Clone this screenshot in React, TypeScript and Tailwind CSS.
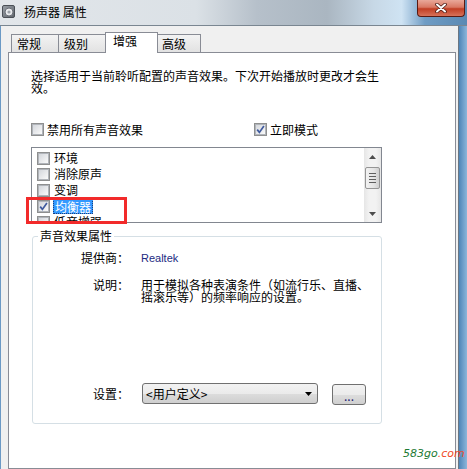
import React from "react";

type Item = { label: string; checked?: boolean; selected?: boolean };

const effects: Item[] = [
    { label: "环境" },
    { label: "消除原声" },
    { label: "变调" },
    { label: "均衡器", checked: true, selected: true },
    { label: "低音增强" },
];

const CheckBox = ({ checked }: { checked?: boolean }) => (
    <span className="flex h-[13px] w-[13px] shrink-0 items-center justify-center border border-[#8e8f8f] bg-[#f4f4f4]">
        <span className="flex h-[11px] w-[11px] items-center justify-center border border-[#b0b4ba] bg-gradient-to-br from-[#d4d7dc] to-[#fafafa]">
            {checked && (
                <svg width="9" height="9" viewBox="0 0 9 9">
                    <path d="M1.2 4.6 L3.4 7.4 L7.9 1" stroke="#3f5a9e" strokeWidth="1.7" fill="none" />
                </svg>
            )}
        </span>
    </span>
);

const SpeakerIcon = () => (
    <svg width="13" height="13" viewBox="0 0 13 13" className="ml-[2px] mt-[5px]">
        <defs>
            <linearGradient id="spk" x1="0" y1="0" x2="1" y2="1">
                <stop offset="0" stopColor="#9aa0a7" />
                <stop offset="1" stopColor="#5e636b" />
            </linearGradient>
        </defs>
        <rect x="0.5" y="0.5" width="12" height="12" rx="1.5" fill="url(#spk)" stroke="#4b5057" />
        <circle cx="7" cy="7" r="4" fill="#e9ebee" stroke="#6b7078" />
        <circle cx="7" cy="7" r="1.6" fill="#9ca1a8" />
    </svg>
);

const CloseButton = () => (
    <div className="ml-auto mr-[2px] flex h-[17px] w-[48px] items-center justify-center rounded-b-[4px] border border-t-0 border-[#5a1a12] bg-[linear-gradient(#e9a899_0%,#d97863_45%,#c13e24_55%,#d7725a_100%)]">
        <svg width="12" height="10" viewBox="0 0 12 10">
            <path d="M2 1.5 L10 8.5 M10 1.5 L2 8.5" stroke="#4a1a14" strokeWidth="3.6" strokeLinecap="round" />
            <path d="M2 1.5 L10 8.5 M10 1.5 L2 8.5" stroke="#ffffff" strokeWidth="2" strokeLinecap="round" />
        </svg>
    </div>
);

const Triangle = ({ up, color = "#4d4d4d" }: { up?: boolean; color?: string }) => (
    <svg width="7" height="4" viewBox="0 0 7 4">
        <path d={up ? "M0 4 L3.5 0 L7 4 Z" : "M0 0 L7 0 L3.5 4 Z"} fill={color} />
    </svg>
);

const App = () => {
    return (
        <div className="relative h-[469px] w-[467px] overflow-hidden bg-[#f0f0f0] font-['Noto_Sans_CJK_SC','Noto_Sans',sans-serif] text-[12px] leading-[12px] text-black">
            {/* title bar */}
            <div className="flex h-[25px] items-start bg-[linear-gradient(90deg,#e2e6ea_0%,#dbe1e6_42%,#b6c0ca_55%,#aab6c1_70%,#c7d8e6_80%,#cfe3f3_86%,#6f9cc4_91%,#5a89b3_100%)]">
                <SpeakerIcon />
                <span className="ml-[9px] mt-[6px] text-[12px] leading-[12px]">扬声器 属性</span>
                <CloseButton />
            </div>

            <div className="flex h-[444px] border-t border-[#7a8691]">
                <div className="w-px bg-[#6b99c5]" />
                <div className="flex w-[457px] flex-col pl-[7px] pr-[2px] pt-[6px]">
                    {/* tabs */}
                    <div className="flex h-[20px] items-end pl-[3px]">
                        <div className="h-[18px] w-[48px] border border-b-0 border-[#898c95] bg-gradient-to-b from-[#f3f3f3] to-[#e2e2e2] pl-[5px] pt-[3px]">常规</div>
                        <div className="-ml-px h-[18px] w-[48px] border border-b-0 border-[#898c95] bg-gradient-to-b from-[#f3f3f3] to-[#e2e2e2] pl-[5px] pt-[3px]">级别</div>
                        <div className="relative z-10 -mb-px -ml-px h-[21px] w-[53px] border border-b-0 border-[#898c95] bg-white pl-[7px] pt-[2px]">增强</div>
                        <div className="-ml-px h-[18px] w-[44px] border border-b-0 border-[#898c95] bg-gradient-to-b from-[#f3f3f3] to-[#e2e2e2] pl-[4px] pt-[3px]">高级</div>
                    </div>

                    {/* tab page */}
                    <div className="h-[420px] border border-[#898c95] bg-white pl-[22px] pt-[17px]">
                        <p className="w-[350px]">
                            选择适用于当前聆听配置的声音效果。下次开始播放时更改才会生效。
                        </p>

                        <div className="mt-[29px] flex h-[13px] items-center">
                            <div className="flex w-[223px] items-center gap-[3px]">
                                <CheckBox />
                                <span>禁用所有声音效果</span>
                            </div>
                            <div className="flex items-center gap-[3px]">
                                <CheckBox checked />
                                <span>立即模式</span>
                            </div>
                        </div>

                        {/* effect list */}
                        <div className="mt-[11px] flex h-[76px] w-[351px] overflow-hidden border border-[#828790]">
                            <div className="flex-1 pl-[5px] pt-[2px]">
                                {effects.map((item) => (
                                    <div key={item.label} className="flex h-[16px] items-center">
                                        <CheckBox checked={item.checked} />
                                        {item.selected ? (
                                            <span className="ml-[3px] h-[16px] border border-dotted border-[#1f3f7a] bg-[#3399ff] px-[1px] pt-[1px] leading-[13px] text-white">
                                                {item.label}
                                            </span>
                                        ) : (
                                            <span className="ml-[4px]">{item.label}</span>
                                        )}
                                    </div>
                                ))}
                            </div>
                            <div className="flex w-[17px] flex-col bg-[linear-gradient(90deg,#e6e6e6,#f2f2f2_30%,#f2f2f2_70%,#e6e6e6)]">
                                <div className="flex h-[17px] items-center justify-center">
                                    <Triangle up />
                                </div>
                                <div className="mx-px mt-[2px] flex h-[22px] flex-col items-center justify-center gap-[2px] rounded-[2px] border border-[#959595] bg-[linear-gradient(90deg,#f2f2f2,#e4e4e4_60%,#cfcfcf)]">
                                    <span className="h-px w-[7px] bg-[#5f5f5f]" />
                                    <span className="h-px w-[7px] bg-[#5f5f5f]" />
                                    <span className="h-px w-[7px] bg-[#5f5f5f]" />
                                    <span className="h-px w-[7px] bg-[#5f5f5f]" />
                                </div>
                                <div className="mt-auto flex h-[17px] items-center justify-center">
                                    <Triangle />
                                </div>
                            </div>
                        </div>

                        {/* properties group */}
                        <fieldset className="ml-px mt-[7px] w-[350px] rounded-[3px] border border-[#d5dfe5] pb-[18px]">
                            <legend className="ml-[5px] px-[2px]">声音效果属性</legend>
                            <div className="mt-[10px] flex">
                                <span className="w-[96px] text-right">提供商：</span>
                                <span className="ml-[12px] font-['Liberation_Sans',sans-serif] text-[11px] leading-[12px] text-[#1d2b82]">Realtek</span>
                            </div>
                            <div className="mt-[15px] flex">
                                <span className="w-[96px] shrink-0 text-right">说明：</span>
                                <p className="ml-[12px] w-[239px]">用于模拟各种表演条件（如流行乐、直播、摇滚乐等）的频率响应的设置。</p>
                            </div>
                            <div className="mt-[79px] flex items-center">
                                <span className="w-[96px] text-right">设置：</span>
                                <div className="ml-[13px] flex h-[21px] w-[176px] items-center justify-between rounded-[3px] border border-[#707070] bg-[linear-gradient(#f2f2f2_0%,#ebebeb_50%,#dddddd_51%,#cfcfcf_100%)] pl-[3px] pr-[5px]">
                                    <span>&lt;用户定义&gt;</span>
                                    <Triangle color="#000000" />
                                </div>
                                <div className="ml-[14px] mt-[2px] flex h-[21px] w-[34px] items-center justify-center rounded-[3px] border border-[#707070] bg-[linear-gradient(#f2f2f2_0%,#ebebeb_50%,#dddddd_51%,#cfcfcf_100%)] pt-[3px] text-[#1a1a72]">
                                    ...
                                </div>
                            </div>
                        </fieldset>
                    </div>
                </div>
                <div className="w-px bg-[#6b7682]" />
                <div className="w-[8px] bg-gradient-to-r from-[#4f86b8] to-[#8db6da]" />
            </div>

            {/* annotation */}
            <div className="absolute left-[26px] top-[197px] h-[27px] w-[101px] border-[3px] border-[#f22a2a]" />
            <div className="absolute left-[403px] top-[447px] font-['DejaVu_Sans',sans-serif] text-[11px] italic leading-[14px]">
                <span className="text-[#1d7a34]">583go</span>
                <span className="text-[#f04a28]">.com</span>
            </div>
        </div>
    );
};

export default App;
